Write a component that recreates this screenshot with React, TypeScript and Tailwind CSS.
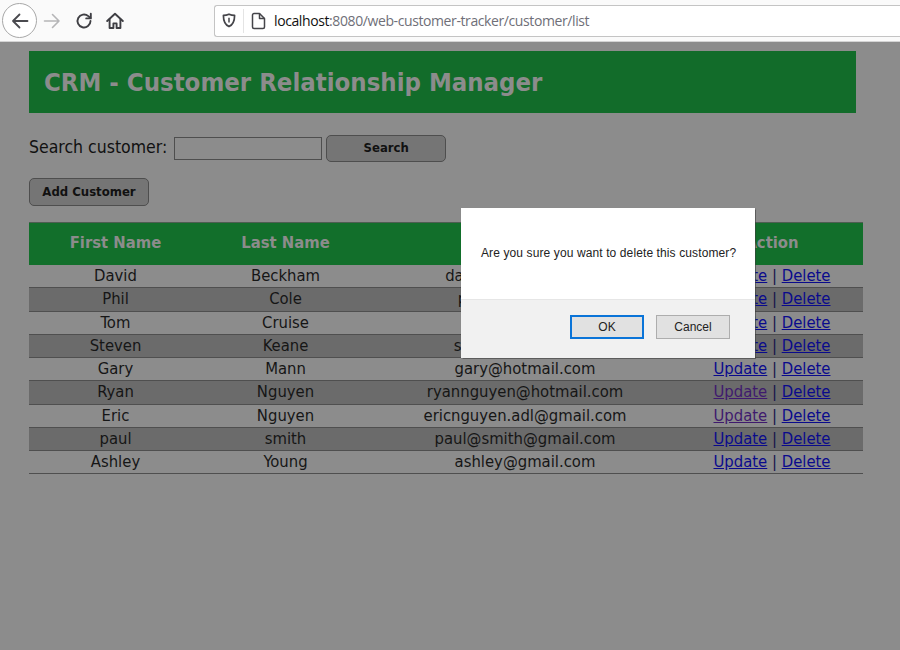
const customers = [
  { first: 'David', last: 'Beckham', email: 'david@luv2code.com' },
  { first: 'Phil', last: 'Cole', email: 'phil@hotmail.com' },
  { first: 'Tom', last: 'Cruise', email: 'tom@gmail.com' },
  { first: 'Steven', last: 'Keane', email: 'steven@gmail.com' },
  { first: 'Gary', last: 'Mann', email: 'gary@hotmail.com' },
  { first: 'Ryan', last: 'Nguyen', email: 'ryannguyen@hotmail.com', visited: true },
  { first: 'Eric', last: 'Nguyen', email: 'ericnguyen.adl@gmail.com', visited: true },
  { first: 'paul', last: 'smith', email: 'paul@smith@gmail.com' },
  { first: 'Ashley', last: 'Young', email: 'ashley@gmail.com' },
];

function Toolbar() {
  return (
    <div className="flex h-[42px] items-center border-b border-[#d4d4d4] bg-[#fafafa]">
      <div className="ml-[2px] flex h-[35px] w-[35px] items-center justify-center rounded-full border border-[#a8a8a8] bg-white">
        <svg width="18" height="18" viewBox="0 0 18 18" fill="none" stroke="#4a4a4f" strokeWidth="1.8" strokeLinecap="round" strokeLinejoin="round">
          <path d="M16.5 9H2M8.5 2.5 2 9l6.5 6.5" />
        </svg>
      </div>
      <svg className="ml-[6px]" width="18" height="18" viewBox="0 0 18 18" fill="none" stroke="#b5b5b7" strokeWidth="1.6" strokeLinecap="round" strokeLinejoin="round">
        <path d="M1.5 9H16M9.5 2.5 16 9l-6.5 6.5" />
      </svg>
      <svg className="ml-[14px]" width="18" height="18" viewBox="0 0 18 18" fill="none" stroke="#3f3f44" strokeWidth="1.9" strokeLinecap="round" strokeLinejoin="round">
        <path d="M15.5 9a6.5 6.5 0 1 1-2.2-4.9L15.5 6" />
        <path d="M15.8 1.8V6.4h-4.6" />
      </svg>
      <svg className="ml-[13px]" width="18" height="18" viewBox="0 0 18 18" fill="none" stroke="#3f3f44" strokeWidth="1.9" strokeLinejoin="round" strokeLinecap="round">
        <path d="M1.2 9 9 1.8 16.8 9" />
        <path d="M3.600 7.400V16h3.800v-4.600h3.200V16h3.800V7.400" />
      </svg>
      <div className="ml-[90px] flex h-[32px] flex-1 items-center rounded-l-[3px] border border-r-0 border-[#c4c4c4] bg-white">
        <svg className="ml-[7px]" width="14" height="15" viewBox="0 0 14 15" fill="none" stroke="#45454a" strokeWidth="1.7" strokeLinejoin="round">
          <path d="M7 1.2c2 .9 3.6 1.2 5.6 1.2 0 5-1.2 9-5.6 11.2C2.600 11.400 1.400 7.400 1.400 2.400 3.400 2.400 5 2.100 7 1.200Z" />
          <path d="M7 4.800v4.800" strokeWidth="1.500" />
        </svg>
        <div className="ml-[7px] h-[24px] w-px bg-[#e4e4e4]" />
        <svg className="ml-[7px]" width="15" height="18" viewBox="0 0 15 18" fill="none" stroke="#45454a" strokeWidth="1.5" strokeLinejoin="round">
          <path d="M3 1.500h5.500l5 5V15a1.500 1.500 0 0 1-1.500 1.500H3A1.500 1.500 0 0 1 1.500 15V3A1.500 1.500 0 0 1 3 1.500Z" />
          <path d="M8.500 1.500v5h5" />
        </svg>
        <div className="ml-[8px] font-['Open_Sans',sans-serif] text-[14px] tracking-[-0.4px] text-[#6f6f78]">
          <span className="text-[#111]">localhost</span>:8080/web-customer-tracker/customer/list
        </div>
      </div>
    </div>
  );
}

function Modal() {
  return (
    <div className="absolute left-[461px] top-[208px] flex h-[150px] w-[294px] flex-col bg-white font-['Liberation_Sans',sans-serif] text-[12px] text-[#222] shadow-[0_0_1px_0.5px_rgba(60,60,60,0.6)]">
      <div className="flex h-[91px] items-center pl-[20px] tracking-[0.11px]">
        <span className="-mt-[1px]">Are you sure you want to delete this customer?</span>
      </div>
      <div className="flex flex-1 items-center justify-end gap-[12px] border-t border-[#e6e6e6] bg-[#f1f1f1] pb-[5px] pr-[25px]">
        <button className="h-[24px] w-[74px] border-2 border-[#0a74d8] bg-[#e1e1e1] text-[#222]">OK</button>
        <button className="h-[24px] w-[74px] border border-[#adadad] bg-[#e1e1e1] text-[#222]">Cancel</button>
      </div>
    </div>
  );
}

export default function App() {
  return (
    <div className="relative h-[650px] w-[900px] overflow-hidden bg-[#8c8c8c] font-['DejaVu_Sans_Condensed','DejaVu_Sans',sans-serif]">
      <Toolbar />
      <div className="pl-[29px] pr-[37px]">
        <div className="mt-[9px] flex h-[62px] w-[827px] items-center bg-[#126c2a] pl-[15px]">
          <h1 className="text-[25.5px] font-bold text-[#8c8c8c]">CRM - Customer Relationship Manager</h1>
        </div>
        <div className="mt-[21px] flex h-[28px] items-center">
          <span className="-mt-[2px] text-[17.5px] text-[#111]">Search customer:</span>
          <input className="ml-[7px] h-[23px] w-[148px] border border-[#4e4e4e] bg-[#8c8c8c]" />
          <button className="ml-[4px] h-[27px] w-[120px] rounded-[5px] border border-[#4e4e4e] bg-[#757575] text-[13px] font-bold text-[#111]">Search</button>
        </div>
        <button className="mt-[16px] block h-[28px] w-[120px] rounded-[5px] border border-[#4e4e4e] bg-[#757575] text-[13px] font-bold text-[#111]">Add Customer</button>
        <table className="mt-[16px] w-[834px] table-fixed border-collapse text-center text-[16.500px] text-[#161616]">
          <colgroup>
            <col className="w-[173px]" />
            <col className="w-[167px]" />
            <col className="w-[312px]" />
            <col className="w-[182px]" />
          </colgroup>
          <thead>
            <tr className="h-[42px] border-t border-[#4e5e52] bg-[#126f2b] text-[#8c8c8c]">
              <th className="font-bold">First Name</th>
              <th className="font-bold">Last Name</th>
              <th className="font-bold">Email</th>
              <th className="font-bold">Action</th>
            </tr>
          </thead>
          <tbody>
            {customers.map((c, i) => (
              <tr key={c.email} className={`h-[23.280px] border-b border-[#4f4f4f] ${i % 2 === 1 ? 'bg-[#6b6b6b]' : ''}`}>
                <td className="p-0 leading-[22px]">{c.first}</td>
                <td className="p-0 leading-[22px]">{c.last}</td>
                <td className="p-0 leading-[22px]">{c.email}</td>
                <td className="p-0 leading-[22px] text-[#12124a]">
                  <a className={`underline ${c.visited ? 'text-[#3f1a6e]' : 'text-[#0a0a8c]'}`} href="#">Update</a>
                  {' | '}
                  <a className="text-[#0a0a8c] underline" href="#">Delete</a>
                </td>
              </tr>
            ))}
          </tbody>
        </table>
      </div>
      <Modal />
    </div>
  );
}
